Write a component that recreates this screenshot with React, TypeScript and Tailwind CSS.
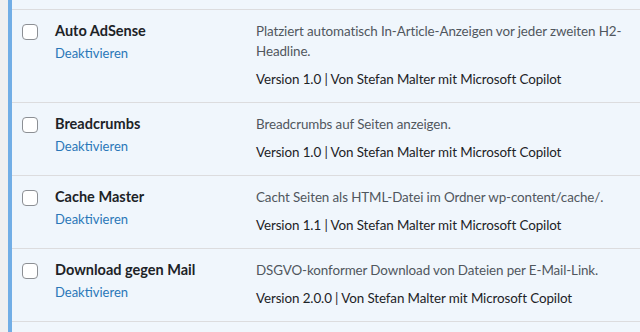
import React from 'react'

interface Plugin {
  name: string
  description: string
  version: string
}

const plugins: Plugin[] = [
  {
    name: 'Auto AdSense',
    description: 'Platziert automatisch In-Article-Anzeigen vor jeder zweiten H2-Headline.',
    version: '1.0',
  },
  { name: 'Breadcrumbs', description: 'Breadcrumbs auf Seiten anzeigen.', version: '1.0' },
  {
    name: 'Cache Master',
    description: 'Cacht Seiten als HTML-Datei im Ordner wp-content/cache/.',
    version: '1.1',
  },
  {
    name: 'Download gegen Mail',
    description: 'DSGVO-konformer Download von Dateien per E-Mail-Link.',
    version: '2.0.0',
  },
]

function PluginRow({ plugin }: { plugin: Plugin }) {
  return (
    <div className="grid grid-cols-[43px_201px_1fr] border-b border-[#dcdcde] pt-[11px] pb-[13px]">
      <div className="pl-[10px] pt-[3px]">
        <div className="w-[16px] h-[16px] rounded-[4px] border border-[#8c8f94] bg-white" />
      </div>
      <div>
        <div className="text-[14.5px] leading-[20px] font-bold text-[#1d2327]">{plugin.name}</div>
        <div className="mt-[2px] text-[13px] leading-[20px] text-[#2a77b8]">Deaktivieren</div>
      </div>
      <div className="pr-[6px] text-[13.4px] tracking-[-0.1px] leading-[20px]">
        <p className="text-[#50575e]">{plugin.description}</p>
        <p className="mt-[8px] text-[#1d2327]">
          Version {plugin.version} | Von Stefan Malter mit Microsoft Copilot
        </p>
      </div>
    </div>
  )
}

export default function App() {
  return (
    <div
      className="w-[640px] h-[332px] overflow-hidden bg-[#f0f0f1] pl-[8px]"
      style={{ fontFamily: 'Lato, "Noto Sans", sans-serif' }}
    >
      <div className="h-full bg-[#f0f6fc] border-l-4 border-[#72aee6] pt-[9px]">
        <div className="border-t border-[#dcdcde]">
          {plugins.map((p) => (
            <PluginRow key={p.name} plugin={p} />
          ))}
        </div>
      </div>
    </div>
  )
}
